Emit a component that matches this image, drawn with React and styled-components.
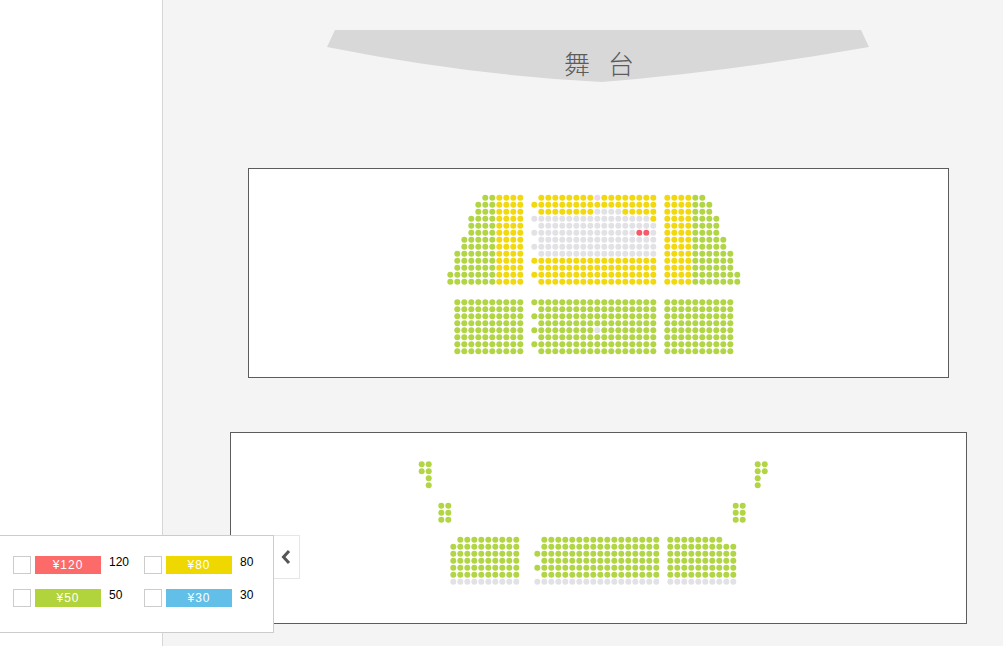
import React from 'react';
import styled, { createGlobalStyle } from 'styled-components';

const COLORS = {
  g: '#b2d546',
  y: '#f1d80f',
  x: '#e2e2e6',
  r: '#f55a6a',
  p: '#efd6e6',
};

const PRICES = [
  { id: 120, label: '¥120', color: '#fd6a6a' },
  { id: 80, label: '¥80', color: '#eed800' },
  { id: 50, label: '¥50', color: '#b1d33c' },
  { id: 30, label: '¥30', color: '#62bfe8' },
];

// one row of seats: first x, seat colour string (space = no seat)
const seatRow = (x0, y, pattern) =>
  pattern.split('').map((c, i) => (c === ' ' ? null : { x: x0 + i * 7, y, c }));

const upperLeft = [
  '     ggyyyy',
  '    gggyyyy',
  '    gggyyyy',
  '   ggggyyyy',
  '   ggggyyyy',
  '   ggggyyyy',
  '  gggggyyyy',
  '  gggggyyyy',
  ' ggggggyyyy',
  ' ggggggyyyy',
  ' ggggggyyyy',
  'gggggggyyyy',
  'gggggggyyyy',
];

const upperMiddle = [
  ' yyyyyyyypyyyyyyyy',
  'yyyyyyyyyyyyyyyyyy',
  ' yyyyyyyyxxxxyyyyy',
  'xxxxxxxxxxxxxxxxxy',
  ' xxxxxxxxxxxxxxxxx',
  'xxxxxxxxxxxxxxxrrx',
  ' xxxxxxxxxxxxxxxxx',
  'xxxxxxxxxxxxxxxxxx',
  ' xxxxxxxxxxxxxxxxx',
  'yyyyyyyyyyyyyyyyyy',
  ' yyyyyyyyyyyyyyyyy',
  'yyyyyyyyyyyyyyyyyy',
  ' yyyyyyyyyyyyyyyyy',
];

const upperRight = [
  'yyyygg',
  'yyyyggg',
  'yyyyggg',
  'yyyygggg',
  'yyyygggg',
  'yyyygggg',
  'yyyyggggg',
  'yyyyggggg',
  'yyyygggggg',
  'yyyygggggg',
  'yyyygggggg',
  'yyyyggggggg',
  'yyyyggggggg',
];

const UPPER_OFFSET = { x: 249, y: 169 };
const LOWER_OFFSET = { x: 231, y: 433 };

const upperSeats = [
  ...upperLeft.flatMap((p, i) => seatRow(450.3, 197.7 + i * 7, p)),
  ...upperMiddle.flatMap((p, i) => seatRow(534.3, 197.7 + i * 7, p)),
  ...upperRight.flatMap((p, i) => seatRow(667.3, 197.7 + i * 7, p)),
  ...Array.from({ length: 8 }).flatMap((_, i) => {
    const y = 302.3 + i * 7;
    const middle = (i % 2 === 0 ? 'g' : ' ') + 'g'.repeat(17);
    return [
      ...seatRow(457.3, y, 'g'.repeat(10)),
      ...seatRow(534.3, y, i === 4 ? 'ggggggggg' + 'x' + 'g'.repeat(8) : middle),
      ...seatRow(667.3, y, 'g'.repeat(10)),
    ];
  }),
].filter(Boolean);

const lowerMiddle = [
  ' ggggggggggggggggg',
  ' ggggggggggggggggg',
  'gggggggggggggggggg',
  ' ggggggggggggggggg',
  'gggggggggggggggggg',
  ' ggggggggggggggggg',
  'xxxxxxxxxxxxxxxxxx',
];

const lowerSeats = [
  ...seatRow(421.7, 464.3, 'gg'),
  ...seatRow(421.7, 471.3, 'gg'),
  ...seatRow(428.7, 478.3, 'g'),
  ...seatRow(428.7, 485.3, 'g'),
  ...seatRow(757.7, 464.3, 'gg'),
  ...seatRow(757.7, 471.3, 'gg'),
  ...seatRow(757.7, 478.3, 'g'),
  ...seatRow(757.7, 485.3, 'g'),
  ...[505.7, 512.7, 519.7].flatMap((y) => [
    ...seatRow(441.3, y, 'gg'),
    ...seatRow(735.7, y, 'gg'),
  ]),
  ...lowerMiddle.flatMap((p, i) => {
    const y = 539.7 + i * 7;
    const c = i === 6 ? 'x' : 'g';
    return [
      ...seatRow(453.3, y, (i === 0 ? ' ' : c) + c.repeat(9)),
      ...seatRow(537.3, y, p),
      ...seatRow(670.3, y, i === 0 ? c.repeat(8) : c.repeat(10)),
    ];
  }),
].filter(Boolean);

const GlobalStyle = createGlobalStyle`
  html, body {
    margin: 0;
    padding: 0;
    height: 100%;
    overflow: hidden;
    background: #f4f4f4;
    font-family: "Liberation Sans", "Noto Sans CJK SC", sans-serif;
  }
`;

const Page = styled.div`
  display: flex;
  height: 646px;
  position: relative;
`;

const Sidebar = styled.aside`
  width: 162px;
  flex: none;
  background: #fff;
  border-right: 1px solid #d6d6d6;
`;

const Main = styled.main`
  flex: 1;
  display: flex;
  flex-direction: column;
  align-items: center;
  padding: 29px 0 0 30px;
`;

const Stage = styled.div`
  width: 542px;
  height: 53px;
  flex: none;
  background: #d8d8d8;
  clip-path: path('M8 1 H534 L542 18 Q 400 43 275 53 Q 140 46 0 18 Z');
  display: flex;
  justify-content: center;
  gap: 18px;
  padding: 19px 0 0 2px;
  box-sizing: border-box;
  color: #5c5c5c;
  font-size: 26px;
  line-height: 30px;
  font-family: "Noto Sans CJK SC", sans-serif;
  font-weight: 300;
`;

const Hall = styled.section`
  width: ${(p) => p.$width}px;
  height: ${(p) => p.$height}px;
  margin-top: ${(p) => p.$top}px;
  flex: none;
  box-sizing: border-box;
  background: #fff;
  border: 1px solid #5c5c5c;
`;

const SeatMap = styled.svg`
  display: block;
  width: 100%;
  height: 100%;
`;

const Legend = styled.div`
  position: absolute;
  left: -1px;
  top: 535px;
  width: 275px;
  height: 98px;
  background: #fff;
  border: 1px solid #ccc;
  display: grid;
  grid-template-columns: 131px 131px;
  grid-auto-rows: 33px;
  padding: 20px 0 0 13px;
  box-sizing: border-box;
`;

const Toggle = styled.button`
  position: absolute;
  left: 274px;
  top: 535px;
  width: 26px;
  height: 44px;
  padding: 0 2px 0 0;
  box-sizing: border-box;
  background: #fff;
  border: 1px solid #e6e6e6;
  border-left: none;
  display: flex;
  align-items: center;
  justify-content: center;
  color: #555;
`;

const PriceItem = styled.label`
  display: flex;
  align-items: flex-start;
`;

const Check = styled.span`
  width: 18px;
  height: 18px;
  flex: none;
  box-sizing: border-box;
  background: #fff;
  border: 1px solid #ccc;
  margin-right: 4px;
`;

const Tag = styled.span`
  width: 66px;
  height: 18px;
  flex: none;
  background: ${(p) => p.$color};
  color: #fff;
  font-size: 12px;
  line-height: 18px;
  text-align: center;
  letter-spacing: 1px;
`;

const Amount = styled.span`
  margin: -1px 0 0 8px;
  font-size: 12px;
  line-height: 14px;
  color: #000;
`;

const Seats = ({ seats, offset, width, height }) => (
  <SeatMap viewBox={`0 0 ${width} ${height}`}>
    {seats.map((s, i) => (
      <circle key={i} cx={s.x - offset.x} cy={s.y - offset.y} r={3} fill={COLORS[s.c]} />
    ))}
  </SeatMap>
);

const App = () => {
  return (
    <Page>
      <GlobalStyle />
      <Sidebar />
      <Main>
        <Stage>
          <span>舞</span>
          <span>台</span>
        </Stage>
        <Hall $width={701} $height={210} $top={86}>
          <Seats seats={upperSeats} offset={UPPER_OFFSET} width={699} height={208} />
        </Hall>
        <Hall $width={737} $height={192} $top={54}>
          <Seats seats={lowerSeats} offset={LOWER_OFFSET} width={735} height={190} />
        </Hall>
      </Main>
      <Legend>
        {PRICES.map((p) => (
          <PriceItem key={p.id}>
            <Check />
            <Tag $color={p.color}>{p.label}</Tag>
            <Amount>{p.id}</Amount>
          </PriceItem>
        ))}
      </Legend>
      <Toggle aria-label="收起">
        <svg width="12" height="16" viewBox="0 0 12 16">
          <path d="M9 2 L3.5 8 L9 14" fill="none" stroke="currentColor" strokeWidth="3" />
        </svg>
      </Toggle>
    </Page>
  );
};

export default App;
